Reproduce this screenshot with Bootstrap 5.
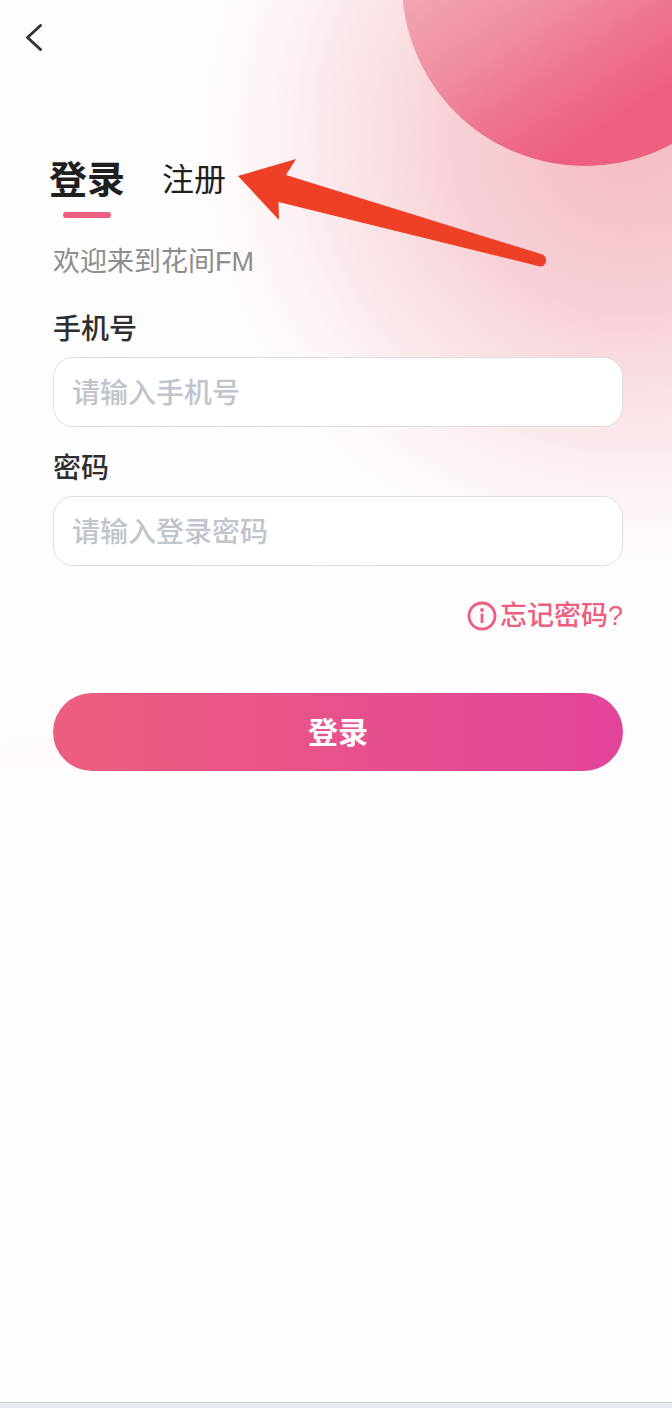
<!DOCTYPE html>
<html lang="zh-CN">
<head>
<meta charset="utf-8">
<meta name="viewport" content="width=device-width, initial-scale=1">
<title>登录 - 花间FM</title>
<link href="https://cdn.jsdelivr.net/npm/bootstrap@5.3.0/dist/css/bootstrap.min.css" rel="stylesheet">
<style>
  :root { --rose: #ed5f7f; }
  body { font-family: "Liberation Sans", "Noto Sans CJK SC", sans-serif; background: #fefefe; color: #1f1f1f; }
  .hero {
    background:
      radial-gradient(circle 440px at right 42px top 135px, #f4bdc6 0, #f5c3cb 70px, #f7d1d8 180px, #f9dce0 230px, #fbe8eb 300px, #fdf4f5 360px, #fffbfc 420px, transparent 440px),
      linear-gradient(to bottom, transparent 680px, #fffafb 770px) left / 120px 100% no-repeat,
      linear-gradient(to right, #fefefe, #fffcfd 50%, #fefdfe);
  }
  .hero-ball {
    width: 366px; height: 366px; top: -200px; right: -96px;
    background: linear-gradient(147deg, #f4b0bb 25%, #f08ea1 50%, #ee7691 62%, var(--rose) 76%);
  }
  .topbar { height: 76px; padding-left: 20px; }
  .form-area { padding: 76px 49px 0 53px; }
  .tab-row { gap: 37px; height: 66px; margin-left: -4px; }
  .tab-link { color: #1f1f1f; font-size: 32px; line-height: 56px; }
  .tab-link.active { font-size: 38px; font-weight: 700; }
  .tab-link.active::after { content: ""; display: block; width: 48px; height: 6px; margin: 4px auto 0; border-radius: 3px; background: var(--rose); }
  .hint-arrow { left: 76px; top: 6px; z-index: 2; pointer-events: none; }
  .welcome { color: #8c8c8c; font-size: 27px; line-height: 36px; margin-top: 26px; }
  .login-form { margin-top: 30px; }
  .field-label { font-size: 28px; font-weight: 500; line-height: 40px; color: #2e2e30; margin-bottom: 7px; }
  .field-input.form-control { height: 70px; border: 1px solid #dcdfe1; border-radius: 20px; padding: 4px 18px 0; font-size: 28px; background: #fff; }
  .field-input::placeholder { color: #c0c4cc; opacity: 1; font-weight: 500; }
  .field-gap { margin-bottom: 22px; }
  .forgot { color: var(--rose); font-size: 27px; font-weight: 500; line-height: 36px; gap: 3px; margin-top: 32px; }
  .submit-btn.btn { height: 78px; margin-top: 59px; border: 0; border-radius: 39px; color: #fff; font-size: 30px; font-weight: 700; background: linear-gradient(to right, #ed5f7e, #e2449b); }
  .bottom-strip { height: 6px; background: #e7ebf1; border-top: 1px solid #cfd2d5; }
</style>
</head>
<body class="d-flex flex-column min-vh-100">
<main class="hero position-relative overflow-hidden">
  <div class="hero-ball position-absolute rounded-circle" aria-hidden="true"></div>
  <header class="topbar d-flex align-items-center">
    <button type="button" class="btn border-0 p-0" aria-label="返回">
      <svg class="d-block" width="28" height="32" viewBox="0 0 28 32" fill="none" stroke="#333436" stroke-width="3" stroke-linecap="round" stroke-linejoin="round"><path d="M20.500 3.500L7.500 15.500L20.500 27.500"/></svg>
    </button>
  </header>
  <div class="form-area position-relative">
    <nav class="tab-row d-flex align-items-start" aria-label="登录方式">
      <a href="#login" class="tab-link active text-decoration-none" aria-current="page">登录</a>
      <div class="position-relative">
        <a href="#register" class="tab-link d-block text-decoration-none">注册</a>
        <svg class="hint-arrow position-absolute" width="310" height="112" viewBox="0 0 310 112" aria-hidden="true"><path fill="#ed4026" d="M0 18L58 1L48 17L303 96Q309 98 308 104Q306 109 302 108.500L40.500 44L41 62Z"/></svg>
      </div>
    </nav>
    <p class="welcome mb-0">欢迎来到花间FM</p>
    <form class="login-form d-flex flex-column">
      <label class="field-label" for="phone">手机号</label>
      <input class="form-control field-input field-gap" id="phone" type="tel" placeholder="请输入手机号">
      <label class="field-label" for="password">密码</label>
      <input class="form-control field-input" id="password" type="password" placeholder="请输入登录密码">
      <a href="#forgot" class="forgot d-flex align-items-center align-self-end text-decoration-none">
        <svg width="30" height="30" viewBox="0 0 30 30" fill="none" stroke="currentColor" stroke-width="2.800" aria-hidden="true"><circle cx="15" cy="15" r="13"/><path d="M15 12.500V22"/><circle cx="15" cy="9" r="1.900" fill="currentColor" stroke="none"/></svg>
        <span>忘记密码?</span>
      </a>
      <button type="submit" class="btn submit-btn w-100">登录</button>
    </form>
  </div>
</main>
<footer class="bottom-strip mt-auto"></footer>
<script src="https://cdn.jsdelivr.net/npm/bootstrap@5.3.0/dist/js/bootstrap.bundle.min.js"></script>
</body>
</html>
